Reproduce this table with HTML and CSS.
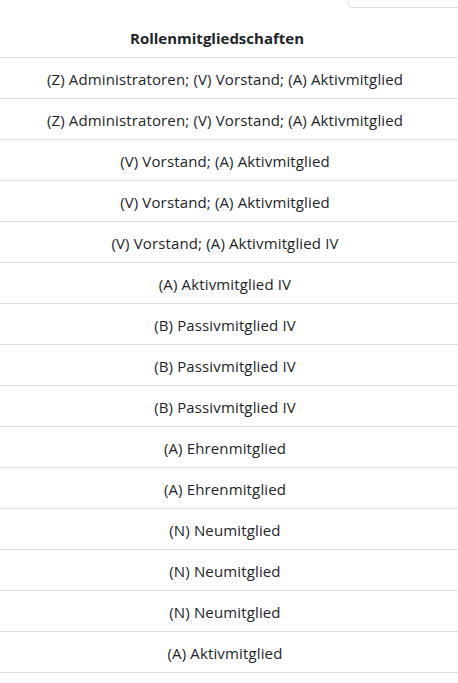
FILE: index.html
```html
<!DOCTYPE html>
<html lang="de">
<head>
<meta charset="utf-8">
<link rel="stylesheet" href="styles.css">
</head>
<body>
<div class="top">
  <div class="search-edge"></div>
</div>
<table class="roles">
  <thead>
    <tr><th>Rollenmitgliedschaften</th></tr>
  </thead>
  <tbody>
    <tr><td>(Z) Administratoren; (V) Vorstand; (A) Aktivmitglied</td></tr>
    <tr><td>(Z) Administratoren; (V) Vorstand; (A) Aktivmitglied</td></tr>
    <tr><td>(V) Vorstand; (A) Aktivmitglied</td></tr>
    <tr><td>(V) Vorstand; (A) Aktivmitglied</td></tr>
    <tr><td>(V) Vorstand; (A) Aktivmitglied IV</td></tr>
    <tr><td>(A) Aktivmitglied IV</td></tr>
    <tr><td>(B) Passivmitglied IV</td></tr>
    <tr><td>(B) Passivmitglied IV</td></tr>
    <tr><td>(B) Passivmitglied IV</td></tr>
    <tr><td>(A) Ehrenmitglied</td></tr>
    <tr><td>(A) Ehrenmitglied</td></tr>
    <tr><td>(N) Neumitglied</td></tr>
    <tr><td>(N) Neumitglied</td></tr>
    <tr><td>(N) Neumitglied</td></tr>
    <tr><td>(A) Aktivmitglied</td></tr>
  </tbody>
</table>
</body>
</html>
```
FILE: styles.css
```css
html, body {
  margin: 0;
  padding: 0;
  background: #fff;
}
body {
  font-family: "Open Sans", "Noto Sans", sans-serif;
  font-size: 15px;
  color: #212529;
}
.top {
  height: 8px;
  margin-bottom: 9px;
  display: flex;
  justify-content: flex-end;
}
.search-edge {
  width: 110px;
  height: 8px;
  border-left: 1px solid #dee2e6;
  border-bottom: 1px solid #dee2e6;
  border-bottom-left-radius: 4px;
  box-sizing: border-box;
}
.roles {
  width: 100%;
  border-collapse: collapse;
}
.roles th,
.roles td {
  text-align: center;
  height: 24px;
  line-height: 24px;
  border-bottom: 1px solid #dee2e6;
}
.roles th {
  font-weight: 700;
  padding: 9px 32px 7px 8px;
}
.roles td {
  padding: 9px 16px 7px 8px;
  letter-spacing: 0.14px;
}
```
